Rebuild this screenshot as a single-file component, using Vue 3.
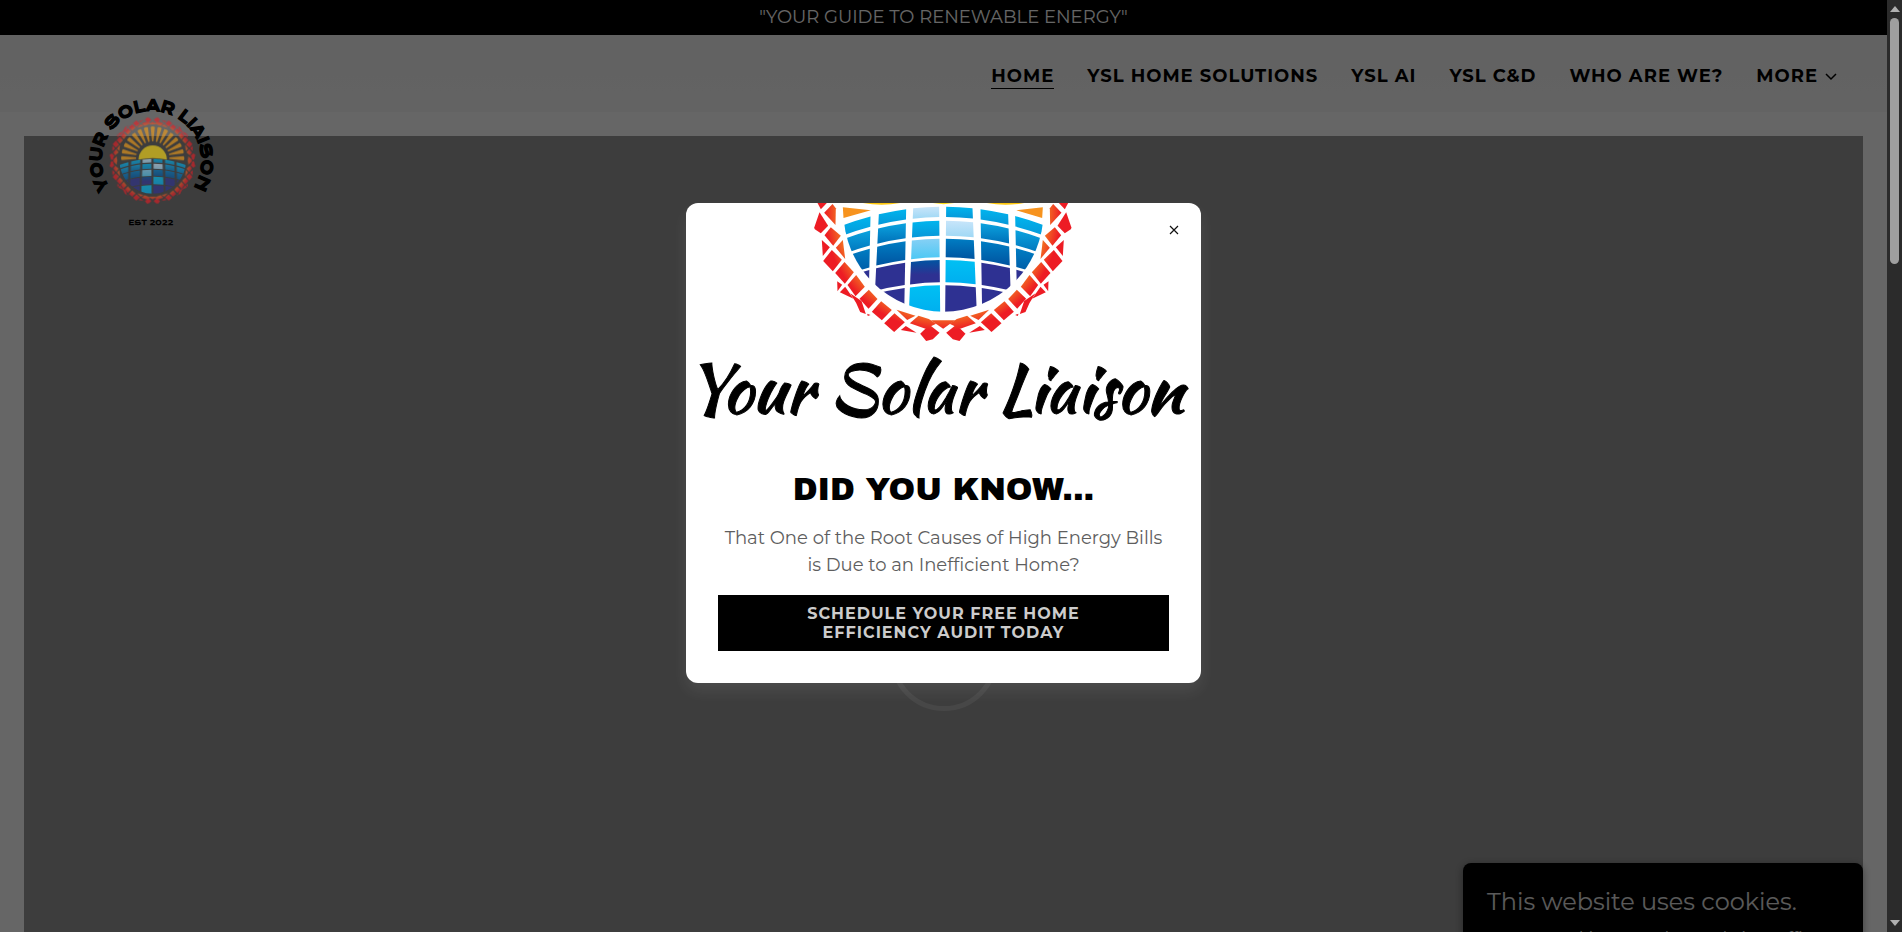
<script setup>
import { ref } from 'vue'

const navItems = ['HOME', 'YSL HOME SOLUTIONS', 'YSL AI', 'YSL C&D', 'WHO ARE WE?']
const modalOpen = ref(true)

// Solar panel tiles: each column gives its left and right edge at the top and bottom of the globe
const columns = [
  [118, 118, 211, 204],
  [236, 220, 318, 312],
  [339, 326, 417, 420],
  [438, 435, 517, 530],
  [541, 546, 624, 634],
  [645, 652, 742, 742],
]
const rows = [[35, 66], [77, 122], [131, 187], [195, 262], [271, 352]]
const fills = [
  ['g1', 'g1', 'pale', 'g1', 'g1', 'g1'],
  ['g2', 'g2', 'g1', 'pale', 'g2', 'g2'],
  ['g3', 'g3', 'sky', 'g3', 'g3', 'g3'],
  ['navy', 'navy', 'g4', 'cyan', 'navy', 'navy'],
  ['navy', 'navy', 'cyan', 'navy', 'navy', 'navy'],
]
const curve = (x) => 55 * ((x - 430) / 300) ** 2
const tiles = []
rows.forEach(([top, bottom], r) => {
  columns.forEach(([lt, lb, rt, rb], c) => {
    const at = (a, b, y) => a + ((b - a) * (y - 35)) / 315
    const x1 = at(lt, lb, top)
    const x2 = at(rt, rb, top)
    const x3 = at(rt, rb, bottom)
    const x4 = at(lt, lb, bottom)
    const mid = (a, b, y) => {
      const m = (a + b) / 2
      return `${m} ${2 * (y + curve(m)) - (2 * y + curve(a) + curve(b)) / 2}`
    }
    tiles.push({
      d: `M${x1} ${top + curve(x1)}Q${mid(x1, x2, top)} ${x2} ${top + curve(x2)}L${x3} ${bottom + curve(x3)}Q${mid(x3, x4, bottom)} ${x4} ${bottom + curve(x4)}Z`,
      fill: `url(#${fills[r][c]})`,
    })
  })
})

const ringHalf = [
  '52,24 80,24 62,43', '72,53 97,27 107,40 106,90', '42,98 58,52 84,92 62,115 44,103',
  '73,121 92,97 122,122 99,152', '65,135 89,157 68,183', '107,158 128,135 135,192',
  '69,198 95,165 125,194 98,229', '105,234 133,201 161,232 134,266',
  '142,270 168,240 194,275 166,304', '178,311 206,284 232,312 205,341',
  '215,350 243,319 275,345 245,376', '252,385 283,355 314,382 282,411',
  '289,344 346,362 321,375', '329,385 355,362 386,372 408,386 376,401',
  '360,416 388,389 418,413 398,433 378,438', '302,405 317,393 349,413',
  '111,259 126,269 112,289', '119,292 135,275 160,311', '150,295 184,318 197,357 180,351 168,324',
  '201,356 211,360 203,363',
]
const rays = Array.from({ length: 15 }, (_, i) => i * 12.86 - 90)
</script>

<template>
  <div class="shell">
    <svg class="defs" aria-hidden="true">
      <defs>
        <linearGradient id="g1" x2="0" y2="1"><stop stop-color="#00b5ee" /><stop offset="1" stop-color="#0797d8" /></linearGradient>
        <linearGradient id="g2" x2="0" y2="1"><stop stop-color="#0ba3df" /><stop offset="1" stop-color="#0070b8" /></linearGradient>
        <linearGradient id="g3" x2="0" y2="1"><stop stop-color="#007dc3" /><stop offset="1" stop-color="#0054a0" /></linearGradient>
        <linearGradient id="g4" x2="0" y2="1"><stop stop-color="#0054a2" /><stop offset=".6" stop-color="#2e3192" /></linearGradient>
        <linearGradient id="pale" x2="0" y2="1"><stop stop-color="#c8e5fa" /><stop offset="1" stop-color="#9fd8f5" /></linearGradient>
        <linearGradient id="sky" x2="0" y2="1"><stop stop-color="#86d0f5" /><stop offset="1" stop-color="#4cc8f4" /></linearGradient>
        <linearGradient id="cyan" x2="0" y2="1"><stop stop-color="#00c0f3" /><stop offset="1" stop-color="#00aeef" /></linearGradient>
        <linearGradient id="navy" x2="0" y2="1"><stop stop-color="#2e3192" /><stop offset="1" stop-color="#2e3192" /></linearGradient>
        <radialGradient id="ember" gradientUnits="userSpaceOnUse" cx="430" cy="50" r="388">
          <stop offset=".82" stop-color="#f26a22" /><stop offset=".92" stop-color="#ed1c24" />
        </radialGradient>
        <clipPath id="globeClip"><circle cx="430" cy="50" r="300" /></clipPath>
        <g id="ringHalf" fill="url(#ember)">
          <polygon v-for="p in ringHalf" :key="p" :points="p" />
        </g>
        <g id="ring">
          <use href="#ringHalf" />
          <use href="#ringHalf" transform="matrix(-1 0 0 1 856 0)" />
          <polygon points="392,376 465,376 429,401" fill="url(#ember)" />
        </g>
        <g id="globe" clip-path="url(#globeClip)">
          <path v-for="t in tiles" :key="t.d" :d="t.d" :fill="t.fill" />
        </g>
      </defs>
    </svg>

    <div class="page">
      <p class="promo">"YOUR GUIDE TO RENEWABLE ENERGY"</p>
      <header class="header">
        <a class="logo" href="#" aria-label="Your Solar Liaison">
          <svg viewBox="0 0 130 132" width="130" height="132">
            <path id="arc" d="M26 97A50 50 0 1 1 97 97" fill="none" />
            <text class="arc-text" text-anchor="middle"><textPath href="#arc" startOffset="50%">YOUR SOLAR LIAISON</textPath></text>
            <g class="seal" transform="translate(15 56) scale(.111)">
              <use href="#ring" />
              <use href="#ring" transform="matrix(1 0 0 -1 0 100)" />
              <use href="#globe" />
              <path
                v-for="a in rays" :key="a" d="M424 -122L411 -252Q430 -262 449 -252L436 -122Z"
                fill="#f7a11a" :transform="`rotate(${a} 430 28)`"
              />
              <path d="M302 42A128 128 0 0 1 558 42Q430 12 302 42Z" fill="#ffde17" />
            </g>
            <text class="est" x="61" y="126" text-anchor="middle">EST 2022</text>
          </svg>
        </a>
        <nav class="nav">
          <a v-for="(item, i) in navItems" :key="item" href="#" :class="{ active: i === 0 }">{{ item }}</a>
          <button type="button">
            MORE
            <svg width="12" height="8" viewBox="0 0 12 8"><path d="M1 1l5 5 5-5" fill="none" stroke="#000" stroke-width="1.5" /></svg>
          </button>
        </nav>
      </header>
      <main class="hero"><span class="loader"></span></main>
      <section class="cookies">
        <h2>This website uses cookies.</h2>
        <p>We use cookies to analyze website traffic and optimize your website experience.</p>
      </section>

      <div v-if="modalOpen" class="overlay">
        <div class="modal" role="dialog" aria-labelledby="modal-title">
          <button class="close" type="button" aria-label="Close" @click="modalOpen = false">
            <svg width="10" height="10" viewBox="0 0 10 10"><path d="M1 1l8 8M9 1l-8 8" stroke="#111" stroke-width="1.2" /></svg>
          </button>
          <svg class="emblem" viewBox="0 24 860 420" aria-hidden="true">
            <use href="#ring" />
            <use href="#globe" />
            <path d="M128 37L212 46 130 69ZM728 37L648 46 726 69Z" fill="#f7931e" />
            <path d="M188 24H300Q245 34 188 24ZM560 24H672Q615 34 560 24Z" fill="#fdc70c" />
            <path d="M398 24H462L430 28Z" fill="#ffde17" />
          </svg>
          <div class="wordmark">Your Solar Liaison</div>
          <div class="body">
            <h1 id="modal-title">DID YOU KNOW...</h1>
            <p>That One of the Root Causes of High Energy Bills is Due to an Inefficient Home?</p>
            <a class="cta" href="#">SCHEDULE YOUR FREE HOME EFFICIENCY AUDIT TODAY</a>
          </div>
        </div>
      </div>
    </div>

    <div class="scrollbar" aria-hidden="true">
      <svg width="10" height="6" viewBox="0 0 10 6"><path d="M0 6L5 0l5 6z" fill="#b0b0b0" /></svg>
      <div class="track"><div class="thumb"></div></div>
      <svg width="10" height="6" viewBox="0 0 10 6"><path d="M0 0L5 6l5-6z" fill="#b0b0b0" /></svg>
    </div>
  </div>
</template>

<style>
body { margin: 0; overflow: hidden; }
</style>

<style scoped>
* { box-sizing: border-box; }
h1, h2, p { margin: 0; }
a { color: inherit; text-decoration: none; }
button { border: 0; background: none; padding: 0; font: inherit; letter-spacing: inherit; color: inherit; cursor: pointer; }
.shell { display: flex; height: 100vh; font-family: Montserrat, Inter, sans-serif; }
.defs { position: absolute; width: 0; height: 0; }
.page { position: relative; flex: 1; overflow: hidden; background: #fff; }
.promo { height: 35px; background: #000; color: #fff; text-align: center; font-size: 18px; line-height: 34px; }
.header { position: relative; display: flex; justify-content: flex-end; height: 77px; padding: 30px 50px 0; background: linear-gradient(#f4f4f4, #f8f8f8); }
.logo { position: absolute; left: 90px; top: 64px; z-index: 1; }
.logo svg { display: block; overflow: visible; }
.arc-text { font: bold 15px "Krona One", "DejaVu Sans", sans-serif; stroke: #000; stroke-width: 1px; }
.seal { opacity: .6; }
.est { font: bold 7px "Krona One", "DejaVu Sans", sans-serif; }
.nav { display: flex; align-items: flex-start; gap: 33px; font-size: 18px; font-weight: 700; line-height: 23px; letter-spacing: 1px; color: #000; }
.nav .active { border-bottom: 1px solid #000; }
.nav button { display: flex; align-items: center; gap: 7px; }
.hero { display: flex; align-items: center; justify-content: center; height: 1042px; margin: 24px 24px 0; background: #999; }
.loader { width: 108px; height: 108px; border: 5px solid #b2b2b2; border-radius: 50%; }
.cookies { position: absolute; right: 24px; top: calc(100vh - 69px); width: 400px; padding: 24px; border-radius: 8px; background: #000; color: #e0e0e0; box-shadow: 0 2px 8px rgba(0, 0, 0, .4); }
.cookies h2 { font-size: 24px; font-weight: 400; line-height: 30px; }
.cookies p { margin-top: 10px; font-size: 16px; line-height: 24px; }
.overlay { position: absolute; inset: 0; display: flex; align-items: center; justify-content: center; padding-bottom: 46px; background: rgba(0, 0, 0, .6); }
.modal { position: relative; width: 515px; border-radius: 12px; background: #fff; overflow: hidden; box-shadow: 0 8px 16px rgba(255, 255, 255, .08); }
.close { position: absolute; right: 22px; top: 22px; width: 10px; height: 10px; }
.close svg { display: block; }
.emblem { display: block; width: 287px; height: 140px; margin: 0 auto; }
.wordmark { height: 120px; padding-right: 20px; text-align: center; white-space: nowrap; color: #000; font: 400 68px/92px "Kaushan Script", "Caveat Brush", cursive; -webkit-text-stroke: 1px #000; }
.body { padding: 8px 32px 32px; text-align: center; }
h1 { font: 400 32px/38px "Archivo Black", Inter, sans-serif; color: #000; }
.body p { margin-top: 16px; font-size: 18px; line-height: 27px; color: #5e5e5e; }
.cta { display: block; margin-top: 16px; padding: 9px 64px; background: #000; color: #ccc; font-size: 16px; font-weight: 700; line-height: 19px; letter-spacing: 1px; }
.scrollbar { display: flex; flex-direction: column; align-items: center; width: 15px; padding: 6px 0; background: #2b2b2b; }
.track { flex: 1; width: 9px; margin: 6px 0; }
.thumb { height: 246px; border-radius: 5px; background: #9f9f9f; }
</style>
